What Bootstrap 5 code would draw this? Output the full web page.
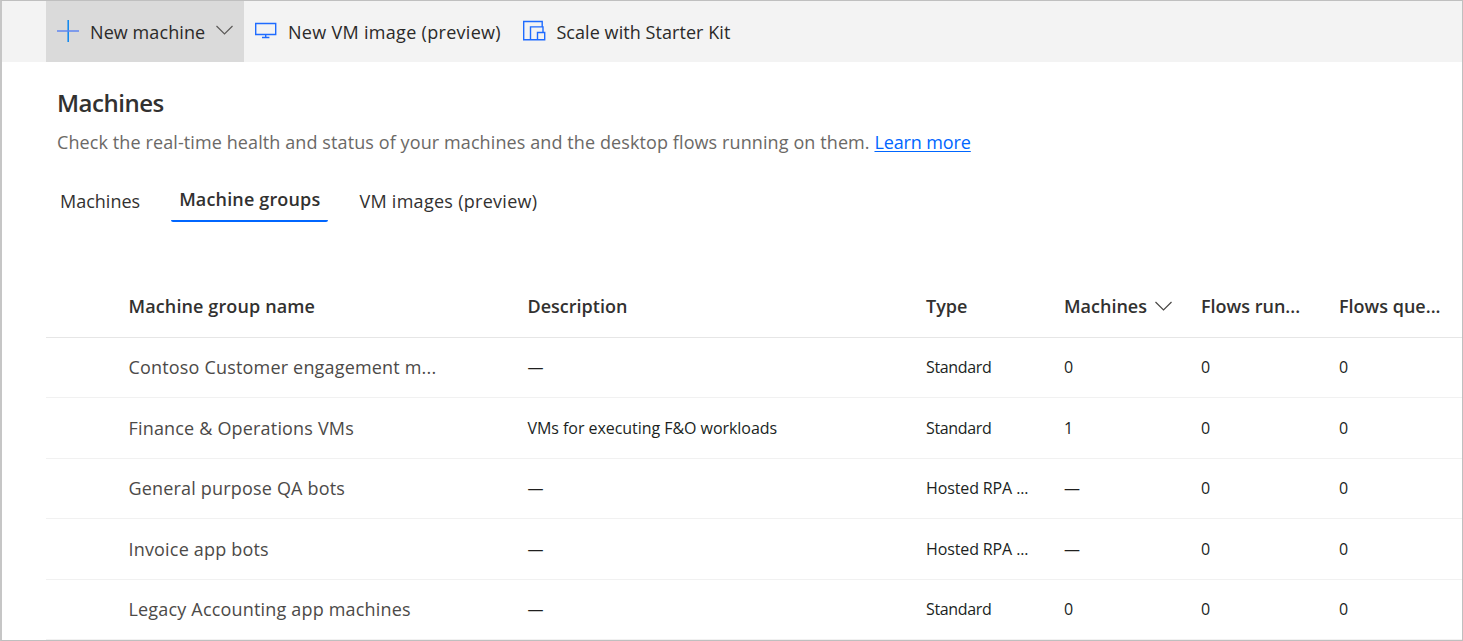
<!DOCTYPE html>
<html lang="en">
<head>
<meta charset="utf-8">
<meta name="viewport" content="width=device-width, initial-scale=1">
<title>Machines</title>
<link href="https://cdn.jsdelivr.net/npm/bootstrap@5.3.0/dist/css/bootstrap.min.css" rel="stylesheet">
<style>
  body { font-family: "Open Sans", "Noto Sans", sans-serif; font-size: 18px; line-height: 26px; color: #323130; }
  .app-frame { height: 641px; border: 1px solid #bfbfbf; border-left: 2px solid #c6c6c6; }
  .command-bar { height: 61px; background: #f3f3f3; padding-left: 44px; }
  .command-bar .btn { --bs-btn-color: #2b2a29; --bs-btn-border-width: 0; font-size: 18px; line-height: 26px; }
  .command-bar svg { flex: none; }
  .btn-new { width: 198px; background: #dadada; letter-spacing: .08px; }
  .btn-new .icon-add { margin: 0 10px; }
  .btn-new .icon-chevron { margin: -4px 9px 0 auto; }
  .btn-image { margin-left: 10px; letter-spacing: .3px; }
  .btn-image .icon-monitor { margin: -3px 10px 0 0; }
  .btn-kit { margin-left: 21.5px; letter-spacing: .06px; }
  .btn-kit .icon-devices { margin: -2px 10px 0 0; }
  .page-head { padding: 25px 0 0 55px; }
  .page-title { font-size: 24px; line-height: 32px; font-weight: 600; margin-bottom: 10px; letter-spacing: -.5px; }
  .page-lead { color: #6b6966; margin-bottom: 0; letter-spacing: .1px; }
  .page-lead a { color: #0066ff; text-underline-offset: 2px; letter-spacing: -.12px; }
  .pivots { margin: 29px 0 0 3px; }
  .pivots .nav-link { color: #323130; padding: 4px 0 0; height: 38px; }
  .pivots .nav-link.active { font-weight: 600; padding: 2px 8px 0; margin: 0 31px 0 31px; border-bottom: 2px solid #0066ff; border-radius: 0 0 2px 2px; letter-spacing: .16px; }
  .pivots .nav-item:last-child { letter-spacing: .28px; }
  .group-table { table-layout: fixed; width: 1416px; margin: 54px 0 0 44px; font-size: 16px; color: #201f1e; letter-spacing: -.05px; }
  .group-table th, .group-table td { height: 61px; padding: 0; border-bottom: 1px solid #f1f1f1; white-space: nowrap; vertical-align: middle; }
  .group-table tbody tr:nth-child(odd) td { height: 60px; }
  .group-table th { font-size: 18px; font-weight: 600; border-color: #e6e6e6; color: #323130; letter-spacing: 0; padding-bottom: 1px; }
  .group-table th:nth-child(2) { letter-spacing: .12px; }
  .group-table th svg { vertical-align: 0; }
  .group-table .group-name { font-size: 18px; color: #4c4a48; letter-spacing: .18px; }
  .group-table .group-type { letter-spacing: -.35px; }
  .group-table .group-type.hosted { letter-spacing: -.12px; }
</style>
</head>
<body>
<div class="app-frame overflow-hidden">
  <nav class="command-bar d-flex">
    <button class="btn btn-new rounded-0 d-flex align-items-center p-0" type="button">
      <svg class="icon-add" width="24" height="24" fill="none" stroke-width="1.5"><path stroke="#0a86f0" d="M12.200 0v22"/><path stroke="#5f86f0" d="M1 11h22"/></svg>
      <span>New machine</span>
      <svg class="icon-chevron" width="20" height="12" fill="none" stroke="#5c5a58" stroke-width="1.2"><path d="M1.500 2l8 8 8-8"/></svg>
    </button>
    <button class="btn btn-image rounded-0 d-flex align-items-center p-0" type="button">
      <svg class="icon-monitor" width="24" height="20" fill="none" stroke="#1f6bff" stroke-width="1.4"><path d="M1.700 3.500h20v11h-20zM11.700 14.500v3M8 17.500h7.400"/></svg>
      <span>New VM image (preview)</span>
    </button>
    <button class="btn btn-kit rounded-0 d-flex align-items-center p-0" type="button">
      <svg class="icon-devices" width="24" height="22" fill="none" stroke="#1f6bff" stroke-width="1.4"><path d="M20.200 6.800V1.500H1.700v18.200h21v-7.200h-7.200v7.200M8.500 19.700V6.900h12.500v5.600"/></svg>
      <span>Scale with Starter Kit</span>
    </button>
  </nav>
  <header class="page-head">
    <h1 class="page-title">Machines</h1>
    <p class="page-lead">Check the real-time health and status of your machines and the desktop flows running on them. <a href="#">Learn more</a></p>
    <ul class="nav pivots">
      <li class="nav-item"><a class="nav-link" href="#">Machines</a></li>
      <li class="nav-item"><a class="nav-link active" href="#">Machine groups</a></li>
      <li class="nav-item"><a class="nav-link" href="#">VM images (preview)</a></li>
    </ul>
  </header>
  <table class="group-table">
    <colgroup><col style="width:82.500px"><col style="width:399px"><col style="width:398.500px"><col style="width:138px"><col style="width:137px"><col style="width:138px"><col></colgroup>
    <thead><tr><th></th><th>Machine group name</th><th>Description</th><th>Type</th><th>Machines <svg width="20" height="12" fill="none" stroke="#484644" stroke-width="1.2"><path d="M3.500 1l8 8 8-8"/></svg></th><th>Flows run...</th><th>Flows que...</th></tr></thead>
    <tbody>
      <tr><td></td><td class="group-name">Contoso Customer engagement m...</td><td>—</td><td class="group-type">Standard</td><td>0</td><td>0</td><td>0</td></tr>
      <tr><td></td><td class="group-name">Finance &amp; Operations VMs</td><td>VMs for executing F&amp;O workloads</td><td class="group-type">Standard</td><td>1</td><td>0</td><td>0</td></tr>
      <tr><td></td><td class="group-name">General purpose QA bots</td><td>—</td><td class="group-type hosted">Hosted RPA ...</td><td>—</td><td>0</td><td>0</td></tr>
      <tr><td></td><td class="group-name">Invoice app bots</td><td>—</td><td class="group-type hosted">Hosted RPA ...</td><td>—</td><td>0</td><td>0</td></tr>
      <tr><td></td><td class="group-name">Legacy Accounting app machines</td><td>—</td><td class="group-type">Standard</td><td>0</td><td>0</td><td>0</td></tr>
    </tbody>
  </table>
</div>
<script src="https://cdn.jsdelivr.net/npm/bootstrap@5.3.0/dist/js/bootstrap.bundle.min.js"></script>
</body>
</html>
